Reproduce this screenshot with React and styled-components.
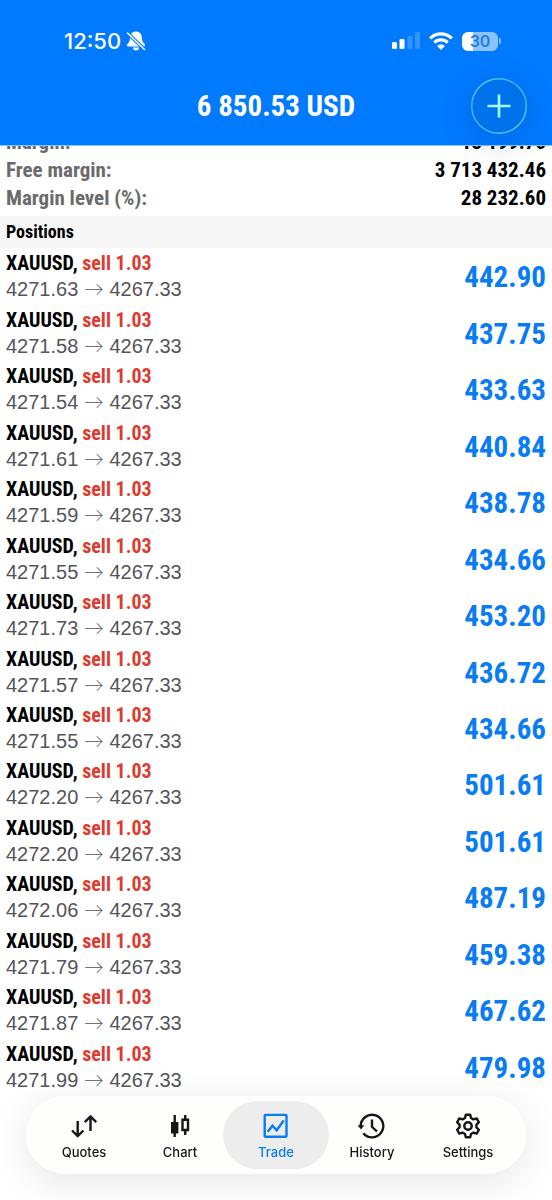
import styled, { createGlobalStyle } from 'styled-components';

const blue = '#007aff';
const condensed = "'Roboto Condensed', 'Liberation Sans', sans-serif";
const system = "Inter, 'Liberation Sans', sans-serif";

const GlobalStyle = createGlobalStyle`
  *,
  *::before,
  *::after {
    box-sizing: border-box;
  }

  body {
    margin: 0;
    background-color: #fff;
    color: #000;
    font-family: 'Liberation Sans', sans-serif;
  }
`;

const Page = styled.div`
  display: flex;
  flex-direction: column;
  min-height: 100vh;
`;

const Header = styled.header`
  position: sticky;
  top: 0;
  z-index: 1;
  padding-bottom: 11px;
  border-bottom: 1px solid #8cc5ff;
  background-color: ${blue};
  color: #fff;
`;

const StatusBar = styled.div`
  display: flex;
  align-items: center;
  justify-content: space-between;
  padding: 28px 51px 24px 64px;
  height: 78px;
`;

const StatusGroup = styled.div`
  display: flex;
  align-items: center;
  gap: ${(props) => props.$gap}px;
`;

const Time = styled.time`
  font: 500 22px/26px ${system};
`;

const Battery = styled.div`
  display: flex;
  align-items: center;
  gap: 1px;

  &::after {
    content: '';
    width: 2px;
    height: 6px;
    border-radius: 0 2px 2px 0;
    background-color: rgba(255, 255, 255, 0.55);
  }
`;

const BatteryLevel = styled.div`
  width: 36px;
  border-radius: 6px;
  background: linear-gradient(
    to right,
    #fff 30%,
    rgba(255, 255, 255, 0.55) 30%
  );
  color: #1b7fe8;
  font: 600 16px/19px ${system};
  text-align: center;
`;

const TitleBar = styled.div`
  display: grid;
  grid-template-columns: 1fr auto 1fr;
  align-items: center;
  padding: 0 25px;
`;

const Title = styled.h1`
  grid-column: 2;
  margin: 0;
  font: 700 29px/36px ${condensed};
`;

const AddButton = styled.button`
  justify-self: end;
  display: block;
  padding: 0;
  width: 56px;
  height: 56px;
  border: 0;
  border-radius: 50%;
  background-color: #0072ec;
  box-shadow: 0 8px 32px rgba(0, 40, 110, 0.2);
  color: #a5fbff;
  cursor: pointer;
`;

const Main = styled.main`
  flex: 1;
  display: flex;
  flex-direction: column;
  margin-top: -18px;
  padding-bottom: 105px;
`;

const Summary = styled.dl`
  margin: 0;
  padding: 0 6px 4px;
  font: 700 21px/28px ${condensed};
`;

const SummaryRow = styled.div`
  display: flex;
  justify-content: space-between;
`;

const SummaryLabel = styled.dt`
  color: #6b6b6b;
`;

const SummaryValue = styled.dd`
  margin: 0;
`;

const SectionTitle = styled.h2`
  margin: 0;
  padding: 0 6px;
  background-color: #f7f7f7;
  font: 700 18px/32px ${condensed};
`;

const Positions = styled.ul`
  flex: 1;
  display: flex;
  flex-direction: column;
  margin: 0;
  padding: 0;
  list-style: none;
`;

const Position = styled.li`
  flex: 1 0 auto;
  display: flex;
  align-items: center;
  justify-content: space-between;
  padding: 1px 6px;
`;

const Symbol = styled.div`
  font: 700 20px/26px ${condensed};
`;

const Side = styled.span`
  color: #dd3b30;
`;

const Prices = styled.div`
  color: #555459;
  font-size: 20px;
  line-height: 26px;
`;

const Arrow = styled.span`
  font-family: Lato, sans-serif;
  font-weight: 300;
  line-height: 1;
`;

const Profit = styled.div`
  padding-top: 2px;
  color: #0a7cf2;
  font: 700 29px/36px ${condensed};
`;

const TabBar = styled.nav`
  position: fixed;
  right: 26px;
  bottom: 26px;
  left: 26px;
  z-index: 1;
  display: flex;
  padding: 5px 10px;
  border-radius: 39px;
  background-color: #fefefd;
  box-shadow: 0 8px 40px rgba(0, 0, 0, 0.1);
`;

const Tab = styled.a`
  flex: 1 1 0;
  display: flex;
  flex-direction: column;
  align-items: center;
  gap: 4px;
  margin: 0 -5px;
  padding: 11px 0 8px;
  border-radius: 34px;
  background-color: ${(props) => (props.$active ? '#ededed' : 'transparent')};
  color: ${(props) => (props.$active ? '#0a7cf2' : '#161616')};
  font: 500 13px/17px ${system};
  text-decoration: none;
`;

const Icon = styled.svg`
  display: block;
  fill: none;
  stroke: currentColor;
  stroke-width: 2.4;
`;

const BellOffIcon = () => (
  <svg width='20' height='20' viewBox='0 0 20 20'>
    <path
      fill='#fff'
      d='M10 .6c-3.400 0-5.600 2.300-5.800 5.400-.2 3.800-.9 5.300-2.700 7.100-1 1-.6 2.400.8 2.400h15.400c1.400 0 1.800-1.400.8-2.400-1.800-1.800-2.500-3.300-2.700-7.100C15.600 2.900 13.400.6 10 .6zM7 16.600a3 2.900 0 0 0 6 0z'
    />
    <path stroke={blue} strokeWidth='3.400' d='M.5 1l18.500 18' />
    <path
      stroke='#fff'
      strokeWidth='1.500'
      strokeLinecap='round'
      d='M1.500 2l17 16.500'
    />
  </svg>
);

const SignalIcon = () => (
  <svg width='28' height='18' viewBox='0 0 28 18' fill='#fff'>
    <rect y='10' width='5' height='7' rx='1.300' />
    <rect x='7.500' y='7' width='5' height='10' rx='1.300' />
    <rect x='15.500' y='4' width='5' height='13' rx='1.300' opacity='.2' />
    <rect x='23' y='0' width='5' height='17' rx='1.300' opacity='.2' />
  </svg>
);

const WifiIcon = () => (
  <svg
    width='24'
    height='18'
    viewBox='0 0 24 18'
    fill='none'
    stroke='#fff'
    strokeWidth='3.200'
  >
    <path d='M1.200 6.300a15.300 15.300 0 0 1 21.600 0' />
    <path d='M5.300 10.700a9.500 9.500 0 0 1 13.400 0' />
    <path
      fill='#fff'
      stroke='none'
      d='M12 18l-3.900-4.100a5.600 5.600 0 0 1 7.800 0z'
    />
  </svg>
);

const PlusIcon = () => (
  <svg width='56' height='56' viewBox='0 0 56 56' fill='none'>
    <defs>
      <linearGradient id='ring' x1='0' y1='0' x2='1' y2='1'>
        <stop offset='0' stopColor='#5fd2ff' />
        <stop offset='.3' stopColor='#45b8ff' />
        <stop offset='.7' stopColor='#45b8ff' />
        <stop offset='1' stopColor='#6fe0ff' />
      </linearGradient>
    </defs>
    <circle cx='28' cy='28' r='27.300' stroke='url(#ring)' strokeWidth='1.400' />
    <path
      stroke='currentColor'
      strokeWidth='2.600'
      d='M28 16.500v23M16.500 28h23'
    />
  </svg>
);

const QuotesIcon = () => (
  <>
    <path d='M7.700 9v15M2 18.500L7.700 24l5.700-5.500' />
    <path d='M20.500 19V4.500M14.800 10.200l5.700-5.700 5.700 5.700' />
  </>
);

const ChartIcon = () => (
  <>
    <path d='M8.700 3v22' />
    <path fill='currentColor' stroke='none' d='M5 10h7.400v11.500H5z' />
    <path d='M16.500 7.700H22V18h-5.500zM19.250 3v4.500M19.250 18v5' />
  </>
);

const TradeIcon = () => (
  <>
    <rect x='2.700' y='2.900' width='21.800' height='21.800' rx='.8' />
    <path d='M5.700 19.700l4.800-6 4.200 4.600 7-9.800' />
  </>
);

const HistoryIcon = () => (
  <>
    <path d='M2.700 14.500A11.300 11.300 0 1 1 5.300 21.300' />
    <path fill='currentColor' stroke='none' d='M-.3 13.300h6.600l-3.300 4.200z' />
    <path d='M14 7.500v7.300l5 4.700' />
  </>
);

const SettingsIcon = () => (
  <>
    <path
      strokeLinejoin='round'
      d='M11 6l.8-3.300h4.400L17 6l2.430 1.400 3.260-.95 2.200 3.800-2.460 2.350v2.800l2.460 2.350-2.200 3.800-3.260-.95L17 22l-.8 3.300h-4.400L11 22l-2.430-1.400-3.260.95-2.200-3.800 2.460-2.350v-2.800L3.110 10.250l2.200-3.800 3.260.95z'
    />
    <circle cx='14' cy='14' r='3.700' />
  </>
);

const summary = [
  { label: 'Margin:', value: '13 199.75' },
  { label: 'Free margin:', value: '3 713 432.46' },
  { label: 'Margin level (%):', value: '28 232.60' },
];

const positions = [
  { open: '4271.63', profit: '442.90' },
  { open: '4271.58', profit: '437.75' },
  { open: '4271.54', profit: '433.63' },
  { open: '4271.61', profit: '440.84' },
  { open: '4271.59', profit: '438.78' },
  { open: '4271.55', profit: '434.66' },
  { open: '4271.73', profit: '453.20' },
  { open: '4271.57', profit: '436.72' },
  { open: '4271.55', profit: '434.66' },
  { open: '4272.20', profit: '501.61' },
  { open: '4272.20', profit: '501.61' },
  { open: '4272.06', profit: '487.19' },
  { open: '4271.79', profit: '459.38' },
  { open: '4271.87', profit: '467.62' },
  { open: '4271.99', profit: '479.98' },
];

const tabs = [
  { id: 'quotes', label: 'Quotes', icon: <QuotesIcon /> },
  { id: 'chart', label: 'Chart', icon: <ChartIcon /> },
  { id: 'trade', label: 'Trade', icon: <TradeIcon /> },
  { id: 'history', label: 'History', icon: <HistoryIcon /> },
  { id: 'settings', label: 'Settings', icon: <SettingsIcon /> },
];

const App = () => {
  const activeTab = 'trade';

  return (
    <Page>
      <GlobalStyle />
      <Header>
        <StatusBar>
          <StatusGroup $gap={5}>
            <Time>12:50</Time>
            <BellOffIcon />
          </StatusGroup>
          <StatusGroup $gap={9}>
            <SignalIcon />
            <WifiIcon />
            <Battery>
              <BatteryLevel>30</BatteryLevel>
            </Battery>
          </StatusGroup>
        </StatusBar>
        <TitleBar>
          <Title>6 850.53 USD</Title>
          <AddButton type='button' aria-label='New order'>
            <PlusIcon />
          </AddButton>
        </TitleBar>
      </Header>

      <Main>
        <Summary>
          {summary.map(({ label, value }) => (
            <SummaryRow key={label}>
              <SummaryLabel>{label}</SummaryLabel>
              <SummaryValue>{value}</SummaryValue>
            </SummaryRow>
          ))}
        </Summary>
        <SectionTitle>Positions</SectionTitle>
        <Positions>
          {positions.map(({ open, profit }, index) => (
            <Position key={index}>
              <div>
                <Symbol>
                  XAUUSD, <Side>sell 1.03</Side>
                </Symbol>
                <Prices>
                  {open} <Arrow>→</Arrow> 4267.33
                </Prices>
              </div>
              <Profit>{profit}</Profit>
            </Position>
          ))}
        </Positions>
      </Main>

      <TabBar>
        {tabs.map(({ id, label, icon }) => (
          <Tab
            key={id}
            href={`#${id}`}
            $active={id === activeTab}
            aria-current={id === activeTab ? 'page' : undefined}
          >
            <Icon width='28' height='28' viewBox='0 0 28 28'>
              {icon}
            </Icon>
            {label}
          </Tab>
        ))}
      </TabBar>
    </Page>
  );
};

export default App;
